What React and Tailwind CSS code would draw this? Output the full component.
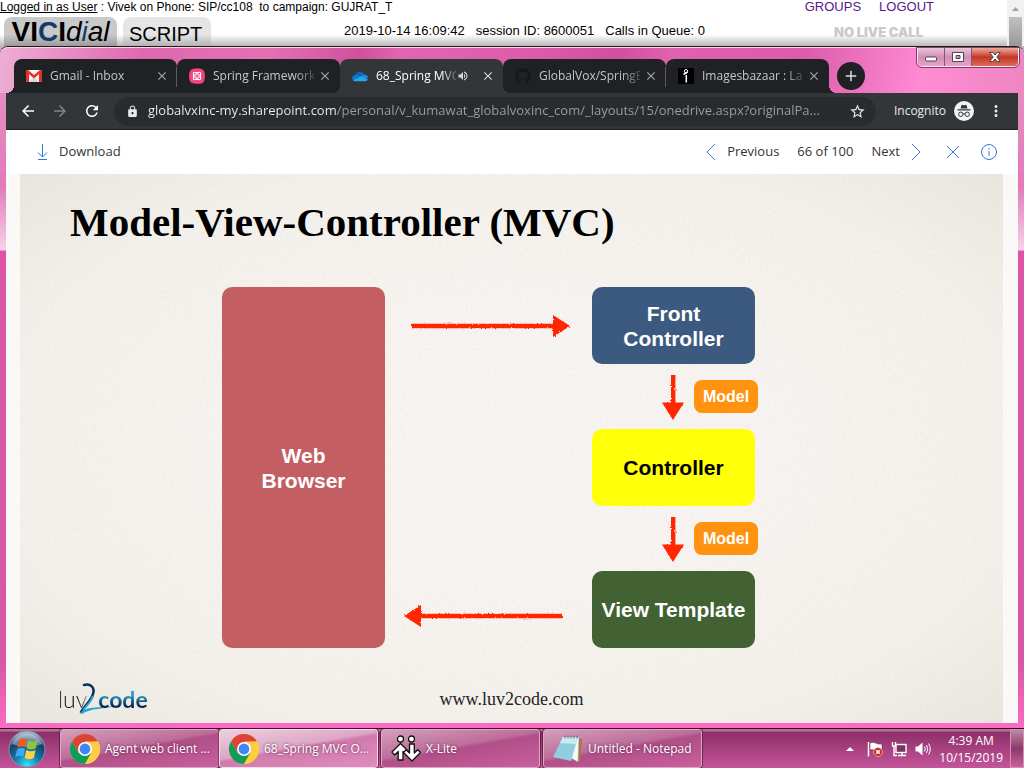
import React from "react";
import {
  MdArrowBack,
  MdArrowForward,
  MdRefresh,
  MdLock,
  MdStarBorder,
  MdMoreVert,
  MdVolumeUp,
  MdClose,
  MdAdd,
} from "react-icons/md";
import { FaGithub } from "react-icons/fa";

const UI = "font-['Open_Sans','Noto_Sans',sans-serif]";

function GmailIcon() {
  return (
    <svg viewBox="0 0 16 16" className="size-4 shrink-0" aria-hidden="true">
      <rect x="0" y="2" width="16" height="12" rx="1" fill="#f2f2f2" />
      <path d="M3 14 8 9l5 5z" fill="#d8d8d8" />
      <path d="M0 3a1 1 0 0 1 1-1h1l6 5 6-5h1a1 1 0 0 1 1 1v10a1 1 0 0 1-1 1h-2V6L8 10.5 3 6v8H1a1 1 0 0 1-1-1z" fill="#e0322b" />
    </svg>
  );
}

function SpringIcon() {
  return (
    <svg viewBox="0 0 16 16" className="size-4 shrink-0" aria-hidden="true">
      <path d="M4 .8C7 0 10 0 13 1.2c2 1 2.400 2 2.700 4.500.3 3 .3 5-.7 7.500-1 2-3 2.400-5 2.600-3 .3-5 .2-7.500-1C.5 13.500.2 12 .1 9.500 0 6 .2 2 4 .8z" fill="#f2457e" />
      <g fill="none" stroke="#fff" strokeWidth="1.100">
        <circle cx="5.800" cy="5.800" r="1.500" />
        <circle cx="10.200" cy="5.800" r="1.500" />
        <circle cx="5.800" cy="10.200" r="1.500" />
        <circle cx="10.200" cy="10.200" r="1.500" />
        <path d="M7 4.500h2M7 11.500h2M4.500 7v2M11.500 7v2" />
      </g>
    </svg>
  );
}

function CloudIcon() {
  return (
    <svg viewBox="0 0 16 16" className="size-4 shrink-0" aria-hidden="true">
      <path d="M3 8a5 5 0 0 1 9.500-1.200L9 10z" fill="#0a64b8" />
      <path d="M3.500 7a3.300 3.300 0 0 0-2.600 5.200L10 9 6 7.100A4 4 0 0 0 3.500 7z" fill="#0f78d4" />
      <path d="M12.500 6.800A3.200 3.200 0 0 1 16 10l-3 1-4-2.500a4.500 4.500 0 0 1 3.500-1.700z" fill="#1490df" />
      <path d="M.9 12.200 9 8.500l6.800 3A2.700 2.700 0 0 1 13 13.200H3.300A3 3 0 0 1 .9 12.200z" fill="#28a8ea" />
    </svg>
  );
}

function BazaarIcon() {
  return (
    <svg viewBox="0 0 16 16" className="size-4 shrink-0" aria-hidden="true">
      <rect width="16" height="16" fill="#000" />
      <circle cx="8" cy="3.200" r="1.700" fill="none" stroke="#fff" />
      <path d="M5.500 6.500 9.500 4M8.300 7v7.500" stroke="#fff" strokeWidth="1.500" />
    </svg>
  );
}

const tabs = [
  { title: "Gmail - Inbox", icon: <GmailIcon />, divider: true },
  { title: "Spring Framework", icon: <SpringIcon /> },
  { title: "68_Spring MVC", icon: <CloudIcon />, active: true, audio: true },
  { title: "GlobalVox/SpringB", icon: <FaGithub className="size-4 shrink-0 text-[#17181a]" />, divider: true },
  { title: "Imagesbazaar : Lar", icon: <BazaarIcon /> },
];

function Tab({ tab, first, last }) {
  return (
    <div
      className={`relative flex h-[34px] w-[163px] min-w-0 items-center rounded-t-lg pl-3 pr-2 ${
        tab.active ? "z-10 bg-[#323639]" : "bg-[#202124]"
      }`}
    >
      {(first || tab.active) && (
        <span
          className={`absolute bottom-0 right-full size-2 ${
            tab.active
              ? "bg-[radial-gradient(circle_at_0_0,transparent_8px,#323639_8px)]"
              : "bg-[radial-gradient(circle_at_0_0,transparent_8px,#202124_8px)]"
          }`}
        />
      )}
      {(last || tab.active) && (
        <span
          className={`absolute bottom-0 left-full size-2 ${
            tab.active
              ? "bg-[radial-gradient(circle_at_100%_0,transparent_8px,#323639_8px)]"
              : "bg-[radial-gradient(circle_at_100%_0,transparent_8px,#202124_8px)]"
          }`}
        />
      )}
      {tab.icon}
      <button
        type="button"
        className={`ml-2 min-w-0 flex-1 overflow-hidden whitespace-nowrap text-left text-xs [mask-image:linear-gradient(to_right,black_82%,transparent_105%)] ${
          tab.active ? "text-white" : "text-[#c3c7cc]"
        }`}
      >
        {tab.title}
      </button>
      {tab.audio && <MdVolumeUp className="ml-px mr-2 size-3 shrink-0 text-[#d5d7da]" />}
      <button
        type="button"
        aria-label={`Close ${tab.title}`}
        className={`ml-1 shrink-0 ${tab.active ? "text-[#d5d7da]" : "text-[#a3a7ab]"}`}
      >
        <MdClose className="size-[14px]" />
      </button>
      {tab.divider && <span className="absolute right-0 top-2 h-5 w-px bg-[#5b5e62]" />}
    </div>
  );
}

function DialerPage() {
  return (
    <header className="flex h-[46px] bg-white font-['Liberation_Sans',Arial,sans-serif] text-[13px] leading-[14px] text-black">
      <div className="flex min-w-0 flex-1 flex-col bg-linear-to-b from-transparent from-75% to-[#b9b9b9]">
        <div className="flex justify-between">
          <p className="whitespace-pre text-xs leading-[14px]">
            <a href="#user" className="underline">Logged in as User</a> : Vivek on Phone: SIP/cc108  to campaign: GUJRAT_T
          </p>
          <nav className="flex gap-[18px] pr-[73px] text-[#551a8b]">
            <a href="#groups">GROUPS</a>
            <a href="#logout">LOGOUT</a>
          </nav>
        </div>
        <div className="flex flex-1 items-start pl-1 pt-[3px]">
          <a
            href="#vicidial"
            className="flex h-[29px] w-[113px] shrink-0 items-center justify-center rounded-t-lg bg-linear-to-b from-[#c9c9c9] from-60% to-[#9b9b9b] text-[28px] leading-[29px]"
          >
            <span className="font-bold">VI<span className="text-[#123a6b]">C</span>I</span>
            <span className="italic">d<span className="text-[#123a6b]">i</span>al</span>
          </a>
          <a
            href="#script"
            className="ml-[6px] flex h-[29px] w-[88px] shrink-0 items-center rounded-t-lg bg-linear-to-b from-[#e5e5e5] from-60% to-[#b3b3b3] pl-[6px] pt-1 text-xl"
          >
            SCRIPT
          </a>
          <p className="ml-[133px] flex gap-[11px] pt-[7px]">
            <span>2019-10-14 16:09:42</span>
            <span>session ID: 8600051</span>
            <span>Calls in Queue: 0</span>
          </p>
          <p className="ml-auto pr-[84px] pt-2 font-['Inter',sans-serif] text-[13px] font-black text-[#cacaca]">
            NO LIVE CALL
          </p>
        </div>
      </div>
      <div className="flex w-[17px] flex-col items-center bg-[#f1f1f1]">
        <svg viewBox="0 0 17 17" className="h-[17px] w-full" aria-hidden="true">
          <path d="M5 11h7L8.500 7z" fill="#a3a3a3" />
        </svg>
        <div className="w-[13px] flex-1 bg-linear-to-b from-[#c1c1c1] to-[#999]" />
      </div>
    </header>
  );
}

function WindowControls() {
  return (
    <div className="ml-auto flex h-[19px] self-start overflow-hidden rounded-b-[5px] border border-t-0 border-white/80 outline outline-[#5b2a48]/80">
      <button type="button" aria-label="Minimize" className="grid w-[27px] place-items-center border-r border-[#8c5574] bg-linear-to-b from-[#eec5dc] via-[#cf8fb2] to-[#e9a0ca]">
        <svg viewBox="0 0 12 10" className="h-[10px] w-3" aria-hidden="true">
          <rect x=".5" y="5" width="11" height="4" rx="1" fill="#fff" stroke="#4d4550" />
        </svg>
      </button>
      <button type="button" aria-label="Restore" className="grid w-[27px] place-items-center border-r border-[#8c5574] bg-linear-to-b from-[#eec5dc] via-[#cf8fb2] to-[#e9a0ca]">
        <svg viewBox="0 0 12 10" className="h-[10px] w-3" aria-hidden="true">
          <path d="M.5.5h11v9H.5zM4 3.500v3h4v-3z" fillRule="evenodd" fill="#fff" stroke="#4d4550" />
        </svg>
      </button>
      <button type="button" aria-label="Close" className="grid w-[46px] place-items-center bg-linear-to-b from-[#eba9a0] via-[#c23523] to-[#dd6a58]">
        <svg viewBox="0 0 12 10" className="h-[10px] w-3" aria-hidden="true">
          <path d="M.7.5h3L6 3 8.300.5h3L7.800 5l3.500 4.500h-3L6 7 3.700 9.500h-3L4.200 5z" fill="#fff" stroke="#4d4550" />
        </svg>
      </button>
    </div>
  );
}

function IncognitoIcon() {
  return (
    <svg viewBox="0 0 20 20" className="size-5" aria-hidden="true">
      <circle cx="10" cy="10" r="10" fill="#f1f3f4" />
      <path d="M7.600 3.800 10 4.300l2.400-.5 1.100 3.700h-7zM3.500 8.300h13v1.200h-13z" fill="#35363a" />
      <g fill="none" stroke="#35363a">
        <circle cx="6.800" cy="13.300" r="2.200" />
        <circle cx="13.200" cy="13.300" r="2.200" />
        <path d="M9 13q1-.8 2 0" />
      </g>
    </svg>
  );
}

function AddressBar() {
  return (
    <div className="flex h-[37px] items-center border-b border-[#1e2022] bg-[#323639] px-[13px] text-[#e8eaed]">
      <div className="flex gap-[14px]">
        <button type="button" aria-label="Back"><MdArrowBack className="size-[18px] text-white" /></button>
        <button type="button" aria-label="Forward"><MdArrowForward className="size-[18px] text-[#7f8286]" /></button>
        <button type="button" aria-label="Reload"><MdRefresh className="size-[18px] text-white" /></button>
      </div>
      <div className="ml-[13px] flex h-[29px] min-w-0 flex-1 items-center rounded-full bg-[#292c2f] pl-3 pr-[10px]">
        <MdLock className="size-[13px] shrink-0" />
        <input
          type="text"
          aria-label="Address"
          readOnly
          value="globalvxinc-my.sharepoint.com/personal/v_kumawat_globalvoxinc_com/_layouts/15/onedrive.aspx?originalPa..."
          className="ml-[9px] min-w-0 flex-1 bg-linear-to-r from-[#f1f3f4] from-[189px] to-[#9aa0a6] to-[189px] bg-clip-text text-[13px] text-transparent outline-none"
        />
        <button type="button" aria-label="Bookmark"><MdStarBorder className="size-[17px]" /></button>
      </div>
      <div className="ml-[18px] flex items-center gap-2 text-xs">
        <span>Incognito</span>
        <IncognitoIcon />
      </div>
      <button type="button" aria-label="Menu" className="ml-[13px]"><MdMoreVert className="size-[18px]" /></button>
    </div>
  );
}

function Stroke({ d, className }) {
  return (
    <svg viewBox="0 0 16 16" className={className} fill="none" stroke="#2f77dd" aria-hidden="true">
      <path d={d} />
    </svg>
  );
}

function ViewerBar() {
  return (
    <div className="flex h-11 items-center bg-white pl-7 pr-[21px] text-[13px] text-[#333]">
      <button type="button" className="flex items-center gap-[9px]">
        <Stroke className="size-4" d="M8.500 0v13M4 8.500 8.500 13 13 8.500M4 15.500h9" />
        Download
      </button>
      <div className="ml-auto flex items-center">
        <button type="button" className="flex items-center gap-2">
          <Stroke className="size-4" d="M12 0 4 8l8 8" />
          Previous
        </button>
        <span className="ml-[18px]">66 of 100</span>
        <button type="button" className="ml-[18px] flex items-center gap-2">
          Next
          <Stroke className="size-4" d="m4 0 8 8-8 8" />
        </button>
        <button type="button" aria-label="Close" className="ml-[21px]">
          <Stroke className="size-4" d="M2 2l12 12M14 2 2 14" />
        </button>
        <button type="button" aria-label="Information" className="ml-5">
          <Stroke className="size-4" d="M8 .5a7.500 7.500 0 1 0 0 15 7.500 7.500 0 0 0 0-15zM8 7v5M8 4v1.500" />
        </button>
      </div>
    </div>
  );
}

function LongArrow({ left, className }) {
  return (
    <svg viewBox="0 0 160 24" className={`h-6 w-40 overflow-visible ${className}`} aria-hidden="true">
      <g transform={left ? "translate(160 24) rotate(180)" : undefined} filter="url(#chalk)" fill="#ff2600">
        <path d="M1 9.800h143v4.400H1z" />
        <path d="M142 1v22l17-11z" />
      </g>
    </svg>
  );
}

function DownArrow() {
  return (
    <svg viewBox="0 0 22 46" className="h-[46px] w-[22px] overflow-visible" aria-hidden="true">
      <g filter="url(#chalk)" fill="#ff2600">
        <path d="M9 1h4.400v30H9z" />
        <path d="M0 28.500h22L11 46z" />
      </g>
    </svg>
  );
}

function Node({ children, className }) {
  return (
    <div className={`grid h-[77px] w-[163px] place-items-center rounded-[10px] text-center text-[21px] font-bold leading-[25px] ${className}`}>
      {children}
    </div>
  );
}

function ModelStep() {
  return (
    <div className="flex h-[65px] items-center pl-[70px]">
      <DownArrow />
      <span className="ml-[10px] grid h-[33px] w-16 place-items-center rounded-lg bg-[#ff9310] text-base font-bold text-white">
        Model
      </span>
    </div>
  );
}

function Slide() {
  return (
    <main className="relative isolate ml-[14px] mr-[15px] flex flex-1 flex-col bg-[radial-gradient(ellipse_at_center,#f8f4f1_35%,#f4f1ec_75%,#eae7e0)]">
      <svg className="pointer-events-none absolute inset-0 -z-10 size-full opacity-15" aria-hidden="true">
        <defs>
          <filter id="paper">
            <feTurbulence type="fractalNoise" baseFrequency="0.35" numOctaves="3" />
            <feColorMatrix values="0 0 0 0 .5  0 0 0 0 .47  0 0 0 0 .42  .9 0 0 0 -.25" />
          </filter>
          <filter id="chalk" x="-5%" y="-20%" width="110%" height="140%">
            <feTurbulence type="fractalNoise" baseFrequency="0.5" numOctaves="2" result="n" />
            <feDisplacementMap in="SourceGraphic" in2="n" scale="2.500" />
          </filter>
        </defs>
        <rect width="100%" height="100%" filter="url(#paper)" />
      </svg>
      <h1 className="pl-[50px] pt-[22px] font-['Liberation_Serif',serif] text-[41px] font-bold leading-[52px] text-black">
        Model-View-Controller (MVC)
      </h1>
      <section className="mt-[39px] flex pl-[202px] font-['Liberation_Sans',Arial,sans-serif]">
        <div className="grid h-[361px] w-[163px] place-items-center rounded-[10px] bg-[#c35f62] text-center text-[21px] font-bold leading-[25px] text-white">
          <p>Web<br />Browser</p>
        </div>
        <div className="flex w-[207px] flex-col justify-between pb-5 pt-[27px]">
          <LongArrow className="ml-[26px]" />
          <LongArrow left className="ml-[18px]" />
        </div>
        <div>
          <Node className="bg-[#3c5a80] text-white"><p>Front<br />Controller</p></Node>
          <ModelStep />
          <Node className="bg-[#ffff0a] text-black"><p>Controller</p></Node>
          <ModelStep />
          <Node className="bg-[#426233] text-white"><p>View Template</p></Node>
        </div>
      </section>
      <footer className="mt-auto grid grid-cols-[1fr_auto_1fr] items-center pb-[6px]">
        <p className="flex pl-[38px] font-['Lato',sans-serif] text-[23px] leading-9">
          <span className="bg-linear-to-r from-[#555] via-black to-[#999] bg-clip-text font-light text-transparent">luv</span>
          <svg viewBox="0 0 15 36" className="-ml-1 h-9 w-[15px] overflow-visible" aria-hidden="true">
            <path d="M1 4C8 2 12 7 10 13 8 20 2 24-2 31" fill="none" stroke="#0b2f5c" strokeWidth="2.500" strokeLinecap="round" />
            <path d="M10 15C8 21 4 24 0 29" fill="none" stroke="#27a3d4" strokeWidth="2" />
            <path d="M-3 32C3 25 14 27 34 25 20 28 8 27-1 33z" fill="#27a3d4" />
          </svg>
          <span className="bg-linear-to-b from-[#2e9dcc] from-40% to-[#092552] to-70% bg-clip-text font-bold text-transparent">code</span>
        </p>
        <p className="font-['Liberation_Serif',serif] text-lg leading-9 text-[#222]">www.luv2code.com</p>
      </footer>
    </main>
  );
}

function BrowserWindow() {
  return (
    <div className="flex flex-1 flex-col rounded-t-lg border-t border-[#2c1522] bg-[linear-gradient(to_bottom,#e58fc2_40px,#e27ab8_140px,#f6d3e8_203px,#dc55a8_204px,#d758a5_90%,#fb6bc4)]">
      <div className="flex h-[46px] items-end rounded-t-lg border-t border-[#f8d5ea] bg-[linear-gradient(100deg,#eeaed4,#df68b0_14%,#e271b4_26%,#d0519b_35%,#e166b1_39%,#dc5caa_52%,#cf509c_60%,#df62ae_65%,#dc5cab_78%,#ff8bd3_90%,#ee86c2)] pl-[14px] pr-[5px]">
        <div className="flex">
          {tabs.map((tab, i) => (
            <Tab key={tab.title} tab={tab} first={i === 0} last={i === tabs.length - 1} />
          ))}
        </div>
        <button type="button" aria-label="New tab" className="mb-[3px] ml-2 grid size-7 place-items-center rounded-full bg-[#202124] text-[#d7dadd]">
          <MdAdd className="size-[18px]" />
        </button>
        <WindowControls />
      </div>
      <div className="mx-[6px] flex flex-1 flex-col bg-[#faf9f8]">
        <AddressBar />
        <ViewerBar />
        <Slide />
      </div>
      <div className="h-[5px] bg-[#fb6bc4]" />
    </div>
  );
}

function ChromeIcon() {
  return (
    <svg viewBox="0 0 30 30" className="size-[30px] shrink-0" aria-hidden="true">
      <circle cx="15" cy="15" r="15" fill="#ffcd42" />
      <path d="M2 7.500A15 15 0 0 1 28 7.500L15 8.500 8.500 18.800z" fill="#db4437" />
      <path d="M2 7.500A15 15 0 0 0 15 30l6.500-11.200-13 0z" fill="#0f9d58" />
      <path d="M28 7.500H15v7l6.500 4.300L15 30A15 15 0 0 0 28 7.500z" fill="#ffcd42" />
      <circle cx="15" cy="15" r="7" fill="#fff" />
      <circle cx="15" cy="15" r="5.400" fill="#4285f4" />
    </svg>
  );
}

function XLiteIcon() {
  return (
    <svg viewBox="0 0 30 30" className="size-[30px] shrink-0" aria-hidden="true">
      <g fill="#fff" stroke="#111" strokeWidth="1.300" strokeLinejoin="round">
        <circle cx="9.500" cy="5" r="3" />
        <circle cx="20.500" cy="5" r="3" />
        <path d="M9.500 9.500 18 18l-2.700 2.700-3.300-3.200V26H7.200v-8.500L3.700 21 1 18z" />
        <path d="M21 27l-8.500-8.500 2.700-2.700 3.300 3.200V10h4.800v9l3.500-3.300 2.700 2.800z" />
      </g>
    </svg>
  );
}

function NotepadIcon() {
  return (
    <svg viewBox="0 0 30 30" className="size-[30px] shrink-0" aria-hidden="true">
      <path d="m25 4 4 1-2 22-4 1z" fill="#a9793c" />
      <path d="M9 3h17l-1 25-7-4z" fill="#f4f8fa" stroke="#8aa5b0" strokeWidth=".5" />
      <path d="M10 3h15L18 27 0 23z" fill="#8fcfe0" />
      <path d="M10 3h15l-2 7L7 9z" fill="#cdeaf2" />
      <path d="M12 1.500v3M15 1.500v3M18 1.500v3M21 1.500v3M24 1.500v3" stroke="#5d6d72" />
    </svg>
  );
}

const taskGroups = [
  [
    { label: "Agent web client ...", icon: <ChromeIcon /> },
    { label: "68_Spring MVC O...", icon: <ChromeIcon />, active: true },
  ],
  [{ label: "X-Lite", icon: <XLiteIcon /> }],
  [{ label: "Untitled - Notepad", icon: <NotepadIcon /> }],
];

function StartOrb() {
  return (
    <svg viewBox="0 0 38 38" className="size-[38px]" aria-hidden="true">
      <defs>
        <radialGradient id="orb" cx=".5" cy=".95" r=".9">
          <stop offset="0" stopColor="#35e6ff" />
          <stop offset=".4" stopColor="#1479ad" />
          <stop offset=".75" stopColor="#1b3f66" />
          <stop offset="1" stopColor="#9fb8cc" />
        </radialGradient>
      </defs>
      <circle cx="19" cy="19" r="18" fill="url(#orb)" stroke="#7e95ab" />
      <path d="M4 14a16 16 0 0 1 30 0q-14 6-30 0z" fill="#fff" opacity=".35" />
      <path d="M11 10q4-3 8-.5l-1.700 8q-4-2.500-8 .5z" fill="#ee5a24" />
      <path d="M20.300 10.300q4.500 2.500 9.200 0l-1.700 8q-4.700 2.500-9.200 0z" fill="#8cc63f" />
      <path d="M9 19.500q4-3 8-.5L15.300 27q-3.700-2.500-8 .5z" fill="#3fa9f5" />
      <path d="M18.300 20q4.500 2.500 9.200 0l-1.700 8q-4.700 2.500-9.200 0z" fill="#ffd23f" />
    </svg>
  );
}

function Taskbar() {
  return (
    <footer className="flex h-10 items-stretch border-t border-[#2a0a1e] bg-linear-to-b from-[#c06b9c] from-[2px] via-[#8d2f69] via-[3px] to-[#c4559a] text-xs text-white">
      <button type="button" aria-label="Start" className="grid w-[54px] place-items-center">
        <StartOrb />
      </button>
      <nav className="ml-[6px] flex gap-[3px]">
        {taskGroups.map((group) => (
          <div key={group[0].label} className="flex">
            {group.map((task) => (
              <button
                key={task.label}
                type="button"
                className={`flex w-[159px] items-center gap-[5px] whitespace-nowrap rounded-[3px] border pl-[9px] text-left outline outline-[#531438]/70 ${
                  task.active
                    ? "border-[#f6dcea] bg-[linear-gradient(170deg,#ecd0df,#dda6c5_45%,#d17bad_50%,#e08cc0)]"
                    : "border-[#dfa6c5] bg-[linear-gradient(170deg,#d3a0bb,#bd6c9a_45%,#b04f88_50%,#c9609f)]"
                }`}
              >
                {task.icon}
                <span className="[text-shadow:0_0_3px_#5a1f44]">{task.label}</span>
              </button>
            ))}
          </div>
        ))}
      </nav>
      <div className="ml-auto flex items-center">
        <button type="button" aria-label="Show hidden icons">
          <svg viewBox="0 0 8 6" className="h-[6px] w-2" aria-hidden="true"><path d="M0 5h8L4 1z" fill="#fff" /></svg>
        </button>
        <svg viewBox="0 0 16 16" className="ml-[13px] size-4" aria-hidden="true">
          <path d="M1.500 1v14.500" stroke="#fff" strokeWidth="1.500" />
          <path d="M3 2q3-1.500 5.500 0T15 3v7q-3 1-6.500-.5T3 9z" fill="#fff" stroke="#5a2043" strokeWidth=".5" />
          <circle cx="11" cy="11" r="4.500" fill="#d9261c" stroke="#fff" strokeWidth=".5" />
          <path d="m9.200 9.200 3.600 3.600m0-3.600-3.600 3.600" stroke="#fff" strokeWidth="1.600" />
        </svg>
        <svg viewBox="0 0 16 16" className="ml-2 size-4" fill="none" stroke="#fff" strokeWidth="1.400" aria-hidden="true">
          <rect x="5" y="3.500" width="10" height="8" fill="#7c3360" />
          <path d="M7 14.500h8M11 12v2M1.500 1v4h3V1M3 5v9.500h3" />
        </svg>
        <svg viewBox="0 0 16 16" className="ml-2 size-4" aria-hidden="true">
          <path d="M.5 5.500H3L7.500 1.500v13L3 10.500H.5z" fill="#fff" />
          <path d="M9.500 5.500q1.500 2.500 0 5M11.500 4q2.500 4 0 8M13.500 2.500q3.500 5.500 0 11" fill="none" stroke="#fff" />
        </svg>
        <time className="ml-2 text-center leading-[17px]">4:39 AM<br />10/15/2019</time>
        <button type="button" aria-label="Show desktop" className="ml-[7px] w-[14px] self-stretch border border-[#d78fb6] bg-linear-to-b from-[#b98aa3] via-[#8c3a69] to-[#c95ea0]" />
      </div>
    </footer>
  );
}

export default function App() {
  return (
    <div className={`flex min-h-screen flex-col bg-[#b9b9b9] ${UI}`}>
      <DialerPage />
      <BrowserWindow />
      <Taskbar />
    </div>
  );
}
